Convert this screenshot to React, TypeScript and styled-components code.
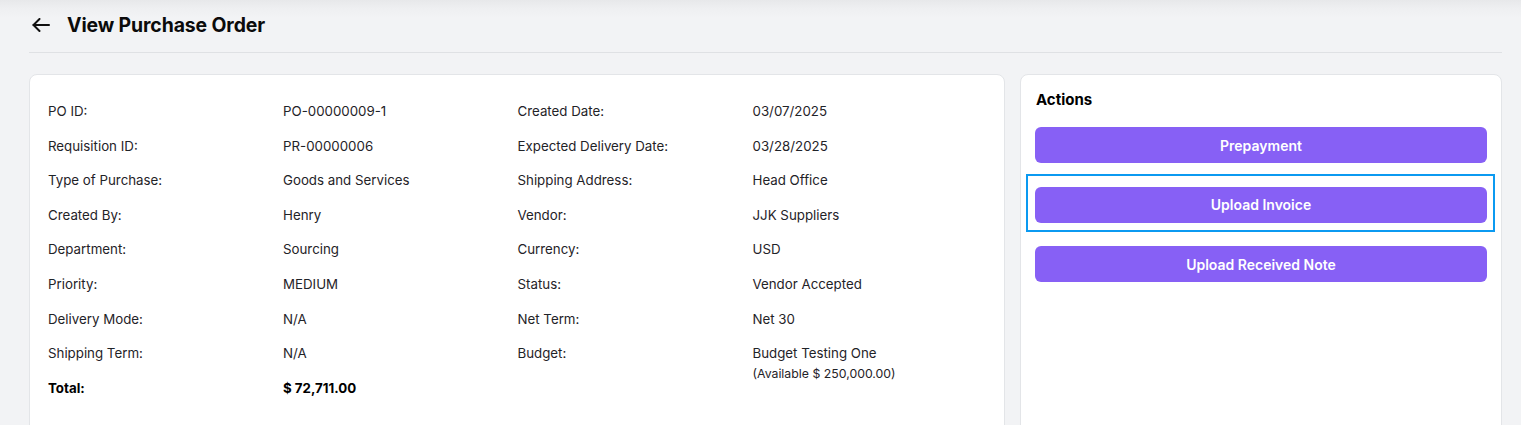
import React from "react";
import styled, { createGlobalStyle } from "styled-components";

const GlobalStyle = createGlobalStyle`
  html, body {
    margin: 0;
    padding: 0;
    background: #f2f3f5;
    font-family: Inter, "Noto Sans", sans-serif;
    color: #1f2328;
    overflow: hidden;
  }
  * { box-sizing: border-box; }
`;

const Page = styled.div`
  min-height: 425px;
  padding: 0 19px 0 29px;
  background: linear-gradient(#e7e8ea 0px, #eeeff1 8px, #f2f3f5 18px);
`;

const Header = styled.header`
  display: flex;
  align-items: center;
  gap: 17px;
  height: 53px;
  padding: 0 0 2px 3px;
  border-bottom: 1px solid #dfe1e4;
`;

const BackButton = styled.button`
  display: flex;
  align-items: center;
  justify-content: center;
  width: 18px;
  height: 18px;
  padding: 0;
  border: none;
  background: none;
  color: #111;
  cursor: pointer;
`;

const Title = styled.h1`
  margin: 0;
  font-size: 19.4px;
  font-weight: 700;
  color: #0b0b0b;
  letter-spacing: -0.1px;
`;

const Content = styled.div`
  display: grid;
  grid-template-columns: minmax(0, 976fr) minmax(0, 482fr);
  gap: 15px;
  padding-top: 21px;
`;

const Card = styled.section`
  background: #fff;
  border: 1px solid #e3e5e8;
  border-radius: 8px;
`;

const DetailsCard = styled(Card)`
  display: grid;
  grid-template-columns: 1fr 1fr;
  padding: 27px 17px 40px 18px;
`;

const DetailBlock = styled.dl`
  display: grid;
  grid-template-columns: 235px 1fr;
  row-gap: 15.1px;
  align-content: start;
  margin: 0;
`;

const Label = styled.dt<{ $strong?: boolean }>`
  font-size: 13.3px;
  line-height: 19.5px;
  font-weight: ${(p) => (p.$strong ? 700 : 400)};
  color: ${(p) => (p.$strong ? "#000" : "#1f2328")};
`;

const Value = styled.dd<{ $strong?: boolean }>`
  margin: 0;
  font-size: 13.3px;
  line-height: 19.5px;
  font-weight: ${(p) => (p.$strong ? 700 : 400)};
  color: ${(p) => (p.$strong ? "#000" : "#1f2328")};
`;

const SubValue = styled.span`
  display: block;
  font-size: 12.3px;
  line-height: 19px;
`;

const ActionsCard = styled(Card)`
  display: flex;
  flex-direction: column;
  padding: 15px 14px 40px 14px;
`;

const ActionsTitle = styled.h2`
  margin: 0 0 17px 1px;
  font-size: 15px;
  line-height: 20px;
  font-weight: 700;
  color: #000;
`;

const ActionList = styled.div`
  display: flex;
  flex-direction: column;
  gap: 23.5px;
`;

const ActionButton = styled.button<{ $focused?: boolean }>`
  position: relative;
  height: 36px;
  border: none;
  border-radius: 6px;
  background: #8760f5;
  color: #fff;
  font-family: Inter, "Noto Sans", sans-serif;
  font-size: 14px;
  font-weight: 600;
  cursor: pointer;

  ${(p) =>
    p.$focused &&
    `
    &::after {
      content: "";
      position: absolute;
      top: -13px;
      bottom: -9px;
      left: -9px;
      right: -8px;
      border: 2px solid #0b9af1;
      pointer-events: none;
    }
  `}
`;

const left: [string, string][] = [
  ["PO ID:", "PO-00000009-1"],
  ["Requisition ID:", "PR-00000006"],
  ["Type of Purchase:", "Goods and Services"],
  ["Created By:", "Henry"],
  ["Department:", "Sourcing"],
  ["Priority:", "MEDIUM"],
  ["Delivery Mode:", "N/A"],
  ["Shipping Term:", "N/A"],
];

const right: [string, string][] = [
  ["Created Date:", "03/07/2025"],
  ["Expected Delivery Date:", "03/28/2025"],
  ["Shipping Address:", "Head Office"],
  ["Vendor:", "JJK Suppliers"],
  ["Currency:", "USD"],
  ["Status:", "Vendor Accepted"],
  ["Net Term:", "Net 30"],
];

const ArrowLeft = () => (
  <svg width="18" height="14" viewBox="0 0 18 14" fill="none" stroke="currentColor" strokeWidth="2" strokeLinecap="round" strokeLinejoin="round">
    <path d="M17 7H1.5" />
    <path d="M7.5 1 1.5 7l6 6" />
  </svg>
);

export default function App() {
  return (
    <>
      <GlobalStyle />
      <Page>
        <Header>
          <BackButton aria-label="Back">
            <ArrowLeft />
          </BackButton>
          <Title>View Purchase Order</Title>
        </Header>
        <Content>
          <DetailsCard>
            <DetailBlock>
              {left.map(([l, v]) => (
                <React.Fragment key={l}>
                  <Label>{l}</Label>
                  <Value>{v}</Value>
                </React.Fragment>
              ))}
              <Label $strong>Total:</Label>
              <Value $strong>$ 72,711.00</Value>
            </DetailBlock>
            <DetailBlock>
              {right.map(([l, v]) => (
                <React.Fragment key={l}>
                  <Label>{l}</Label>
                  <Value>{v}</Value>
                </React.Fragment>
              ))}
              <Label>Budget:</Label>
              <Value>
                Budget Testing One
                <SubValue>(Available $ 250,000.00)</SubValue>
              </Value>
            </DetailBlock>
          </DetailsCard>
          <ActionsCard>
            <ActionsTitle>Actions</ActionsTitle>
            <ActionList>
              <ActionButton>Prepayment</ActionButton>
              <ActionButton $focused>Upload Invoice</ActionButton>
              <ActionButton>Upload Received Note</ActionButton>
            </ActionList>
          </ActionsCard>
        </Content>
      </Page>
    </>
  );
}
